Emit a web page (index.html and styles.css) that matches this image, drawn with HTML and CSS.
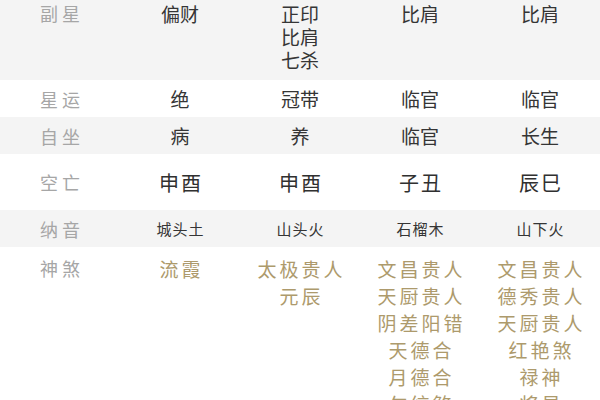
FILE: index.html
```html
<!DOCTYPE html>
<html lang="zh">
<head>
<meta charset="utf-8">
<link rel="stylesheet" href="styles.css">
</head>
<body>
<div class="chart">
  <div class="row row-fu shade">
    <div class="cell label">副星</div>
    <div class="cell val">偏财</div>
    <div class="cell val"><span>正印</span><span>比肩</span><span>七杀</span></div>
    <div class="cell val">比肩</div>
    <div class="cell val">比肩</div>
  </div>
  <div class="row row-short">
    <div class="cell label">星运</div>
    <div class="cell val">绝</div>
    <div class="cell val">冠带</div>
    <div class="cell val">临官</div>
    <div class="cell val">临官</div>
  </div>
  <div class="row row-short shade">
    <div class="cell label">自坐</div>
    <div class="cell val">病</div>
    <div class="cell val">养</div>
    <div class="cell val">临官</div>
    <div class="cell val">长生</div>
  </div>
  <div class="row row-tall">
    <div class="cell label">空亡</div>
    <div class="cell val big">申酉</div>
    <div class="cell val big">申酉</div>
    <div class="cell val big">子丑</div>
    <div class="cell val big">辰巳</div>
  </div>
  <div class="row row-short shade">
    <div class="cell label">纳音</div>
    <div class="cell val small">城头土</div>
    <div class="cell val small">山头火</div>
    <div class="cell val small">石榴木</div>
    <div class="cell val small">山下火</div>
  </div>
  <div class="row row-shen">
    <div class="cell label">神煞</div>
    <div class="cell gold"><span>流霞</span></div>
    <div class="cell gold"><span>太极贵人</span><span>元辰</span></div>
    <div class="cell gold"><span>文昌贵人</span><span>天厨贵人</span><span>阴差阳错</span><span>天德合</span><span>月德合</span><span>勾绞煞</span></div>
    <div class="cell gold"><span>文昌贵人</span><span>德秀贵人</span><span>天厨贵人</span><span>红艳煞</span><span>禄神</span><span>将星</span></div>
  </div>
</div>
</body>
</html>
```

FILE: styles.css
```css
html, body {
  margin: 0;
  padding: 0;
  background: #ffffff;
}
body {
  font-family: "Noto Sans CJK SC", "Noto Sans", sans-serif;
  color: #333333;
  width: 600px;
  height: 400px;
  overflow: hidden;
}
.chart {
  display: flex;
  flex-direction: column;
}
.row {
  display: grid;
  grid-template-columns: repeat(5, 120px);
  align-items: center;
}
.shade {
  background: #f4f4f4;
}
.cell {
  display: flex;
  flex-direction: column;
  align-items: center;
  text-align: center;
}
.label {
  color: #a6a6a6;
  font-size: 18px;
  letter-spacing: 4px;
  padding-left: 4px;
}
.val {
  font-size: 19px;
  color: #353535;
}
.val.big {
  font-size: 20px;
  letter-spacing: 2px;
  padding-left: 2px;
  color: #303030;
}
.val.small {
  font-size: 15px;
  letter-spacing: 1px;
  padding-left: 1px;
}
.row-fu {
  height: 80px;
  box-sizing: border-box;
  padding-top: 2px;
  align-items: start;
  line-height: 23px;
}
.row-short {
  height: 37px;
}
.row-tall {
  height: 56px;
}
.row-shen {
  align-items: start;
  padding-top: 8px;
  line-height: 27px;
}
.gold {
  color: #ad9a6c;
  font-size: 19px;
  letter-spacing: 3px;
  padding-left: 3px;
}
```
